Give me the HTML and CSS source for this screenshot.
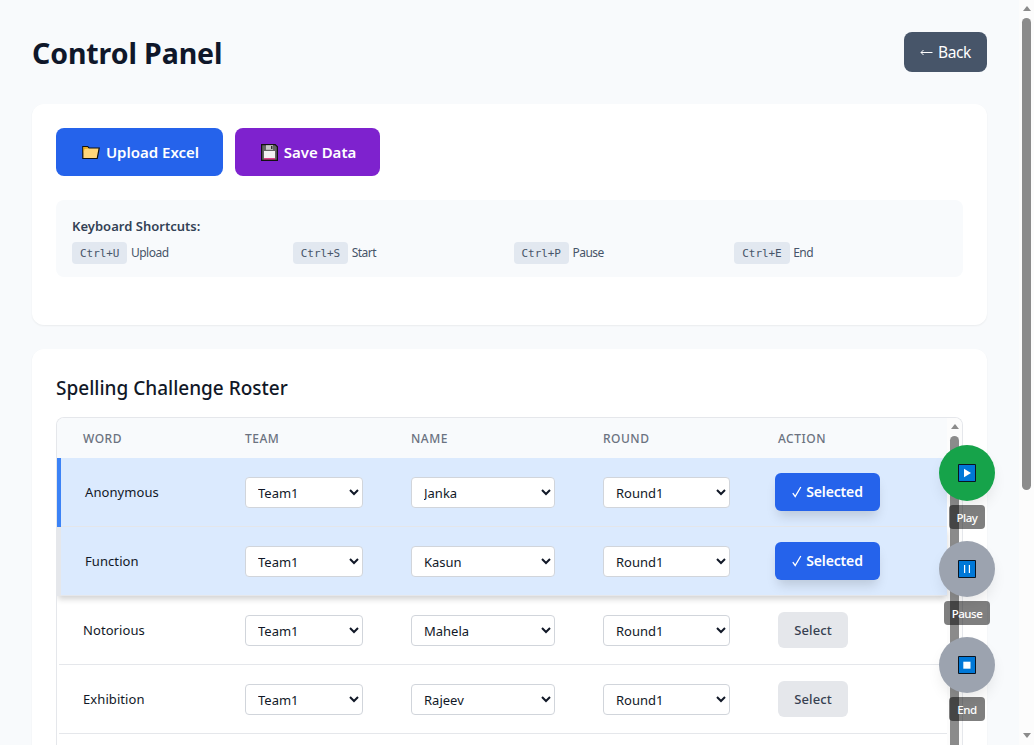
FILE: index.html
```html
<!DOCTYPE html>
<html lang="en">
<head>
<meta charset="utf-8">
<title>Control Panel</title>
<link rel="stylesheet" href="styles.css">
</head>
<body>
<main class="page">
  <header class="top">
    <h1 class="title">Control Panel</h1>
    <button class="back"><svg class="arrow" width="13" height="8" viewBox="0 0 13 8"><path d="M12.5 4.5H1M3.5 2L1 4.5 3.5 7" fill="none" stroke="#fff" stroke-width="1"/></svg><span>Back</span></button>
  </header>
  <section class="card tools">
    <div class="actions">
      <button class="action upload"><svg width="18" height="15" viewBox="0 0 18 15"><path d="M.8 13.5V1.5h4.8L7 3h10.2l-2 10.5z" fill="#ffd679" stroke="#111" stroke-width="1.2"/><path d="M1.5 2.2h3.8l.8 1.2-3.6.4-1 5z" fill="#eaa300"/></svg><span>Upload Excel</span></button>
      <button class="action save"><svg width="17" height="17" viewBox="0 0 17 17"><path d="M.6.6h13.6l2.2 2.2v13.6H.6z" fill="#636363" stroke="#111" stroke-width="1.2"/><path d="M5 1.2h7v4.6H5z" fill="#c8c8c8"/><path d="M10 2h1.5v3H10z" fill="#333"/><path d="M3 7h11v8H3z" fill="#f2f2f2"/><path d="M3 14.2h11v1.3H3z" fill="#d5146b"/></svg><span>Save Data</span></button>
    </div>
    <div class="shortcuts">
      <p class="shortcuts-title">Keyboard Shortcuts:</p>
      <div class="keys">
        <div class="key"><kbd>Ctrl+U</kbd><span>Upload</span></div>
        <div class="key"><kbd>Ctrl+S</kbd><span>Start</span></div>
        <div class="key"><kbd>Ctrl+P</kbd><span>Pause</span></div>
        <div class="key"><kbd>Ctrl+E</kbd><span>End</span></div>
      </div>
    </div>
  </section>
  <section class="card roster">
    <h2 class="subtitle">Spelling Challenge Roster</h2>
    <div class="table-box">
      <div class="table">
        <div class="row head"><span>WORD</span><span>TEAM</span><span>NAME</span><span>ROUND</span><span>ACTION</span></div>
        <div class="row chosen current">
          <span class="word">Anonymous</span>
          <select class="team"><option>Team1</option></select><select class="name"><option>Janka</option></select><select class="round"><option>Round1</option></select>
          <button class="pick on"><svg width="10" height="12" viewBox="0 0 10 12"><path d="M.8 7.2l2.4 3.3L8.8 1" fill="none" stroke="#fff" stroke-width="1.3"/></svg><span>Selected</span></button>
        </div>
        <div class="row chosen last">
          <span class="word">Function</span>
          <select class="team"><option>Team1</option></select><select class="name"><option>Kasun</option></select><select class="round"><option>Round1</option></select>
          <button class="pick on"><svg width="10" height="12" viewBox="0 0 10 12"><path d="M.8 7.2l2.4 3.3L8.8 1" fill="none" stroke="#fff" stroke-width="1.3"/></svg><span>Selected</span></button>
        </div>
        <div class="row">
          <span class="word">Notorious</span>
          <select class="team"><option>Team1</option></select><select class="name"><option>Mahela</option></select><select class="round"><option>Round1</option></select>
          <button class="pick">Select</button>
        </div>
        <div class="row">
          <span class="word">Exhibition</span>
          <select class="team"><option>Team1</option></select><select class="name"><option>Rajeev</option></select><select class="round"><option>Round1</option></select>
          <button class="pick">Select</button>
        </div>
      </div>
      <div class="bar inner"><i class="up"></i><i class="thumb"></i></div>
    </div>
  </section>
</main>
<div class="bar outer"><i class="up"></i><i class="thumb"></i><i class="down"></i></div>
<aside class="controls">
  <div class="control"><button class="circle play"><svg width="18" height="18" viewBox="0 0 18 18"><path d="M.5.5h17v17H.5z" fill="#0078d7" stroke="#0a1420"/><path d="M6 4.8l7 4.2-7 4.2z" fill="#fff"/></svg></button><span class="tip">Play</span></div>
  <div class="control"><button class="circle"><svg width="18" height="18" viewBox="0 0 18 18"><path d="M.5.5h17v17H.5z" fill="#0078d7" stroke="#0a1420"/><path d="M6.6 5v8M11.4 5v8" stroke="#fff" stroke-width="1.2"/></svg></button><span class="tip">Pause</span></div>
  <div class="control"><button class="circle"><svg width="18" height="18" viewBox="0 0 18 18"><path d="M.5.5h17v17H.5z" fill="#0078d7" stroke="#0a1420"/><path d="M5.3 5.7h7.2v7H5.3z" fill="#fff"/></svg></button><span class="tip">End</span></div>
</aside>
</body>
</html>
```
FILE: styles.css
```css
* { box-sizing: border-box; }
body {
  margin: 0;
  height: 745px;
  display: flex;
  overflow: hidden;
  background: #f8fafc;
  color: #111827;
  font-family: "Noto Sans", "Open Sans", sans-serif;
}
button { border: 0; font-family: inherit; padding: 0; display: flex; align-items: center; justify-content: center; white-space: nowrap; }
svg { display: block; flex: none; }
h1, h2, p { margin: 0; white-space: nowrap; }
.page { flex: 1; padding: 32px 32px 0; display: flex; flex-direction: column; min-width: 0; }
.top { display: flex; justify-content: space-between; height: 40px; margin-bottom: 32px; flex: none; }
.title { font-size: 28.5px; line-height: 43px; font-weight: 700; letter-spacing: -0.1px; color: #0f172a; }
.back { width: 83px; height: 40px; border-radius: 8px; background: #475569; color: #fff; font-size: 15.5px; letter-spacing: -0.35px; gap: 5px; }
.card { background: #fff; border-radius: 12px; padding: 24px; box-shadow: 0 1px 2px rgba(0,0,0,.06); flex: none; }
.tools { height: 221px; margin-bottom: 24px; }
.actions { display: flex; gap: 12px; margin-bottom: 24px; }
.action { height: 48px; border-radius: 8px; color: #fff; font-size: 15px; font-weight: 600; padding-left: 2px; }
.upload { width: 167px; background: #2563eb; gap: 6px; letter-spacing: 0; }
.save { width: 145px; background: #7e22ce; gap: 6px; letter-spacing: 0; }
.shortcuts { height: 77px; border-radius: 8px; background: #f8fafc; padding: 16px; }
.shortcuts-title { font-size: 13px; line-height: 20px; font-weight: 600; color: #334155; letter-spacing: 0.02px; }
.keys { display: grid; grid-template-columns: repeat(4, 1fr); gap: 8px; margin-top: 6px; }
.key { display: flex; align-items: center; gap: 3.5px; color: #475569; font-size: 12px; letter-spacing: -0.5px; line-height: 22px; }
kbd { font-family: "DejaVu Sans Mono", monospace; font-size: 11px; letter-spacing: -0.05px; background: #e2e8f0; border-radius: 4px; height: 22px; line-height: 23px; padding: 0 8px; }
.roster { flex: 1; min-height: 0; padding-bottom: 0; border-radius: 12px 12px 0 0; display: flex; flex-direction: column; }
.subtitle { font-size: 19px; line-height: 30px; font-weight: 500; letter-spacing: 0; margin-bottom: 14px; flex: none; }
.table-box { border: 1px solid #e5e7eb; border-bottom: 0; border-radius: 8px 8px 0 0; flex: 1; min-height: 0; display: flex; overflow: hidden; }
.table { width: 890px; flex: none; }
.row { display: grid; grid-template-columns: 162px 166px 192px 175px 1fr; align-items: center; height: 69px; padding: 0 0 1px 26px; position: relative; background: linear-gradient(#e5e7eb, #e5e7eb) 2px 100% / 100% 1px no-repeat; }
.head { height: 40px; padding-bottom: 0; background: #f8fafc; color: #6b7280; font-size: 12px; font-weight: 500; letter-spacing: 0.5px; }
.chosen { background-color: #dbeafe; box-shadow: inset 4px 0 #e5e7eb; }
.current { box-shadow: inset 4px 0 #3b82f6; }
.last { z-index: 1; box-shadow: inset 4px 0 #e5e7eb, 0 4px 6px -1px rgba(0,0,0,.18); }
.word { font-size: 13px; letter-spacing: 0.08px; }
.chosen .word { padding-left: 2px; }
select { height: 31px; border: 1px solid #d1d5db; border-radius: 4px; background: #fff; color: #111827; font: 13px "Noto Sans", sans-serif; padding: 1px 0 0 8px; }
.team { width: 118px; }
.name { width: 144px; }
.round { width: 127px; }
.pick { width: 70px; height: 36px; border-radius: 6px; background: #e5e7eb; color: #374151; font-size: 13px; font-weight: 500; letter-spacing: 0.1px; }
.on { width: 105px; height: 38px; margin-left: -3px; background: #2563eb; color: #fff; font-weight: 600; font-size: 14px; letter-spacing: -0.15px; gap: 4px; padding-bottom: 1px; box-shadow: 0 8px 12px -3px rgba(0,0,0,.15); }
.bar { width: 15px; flex: none; background: #fcfcfc; display: flex; flex-direction: column; align-items: center; overflow: hidden; }
.up, .down { border: 4.5px solid transparent; height: 0; flex: none; }
.up { border-top: 0; border-bottom: 5px solid #8b8b8b; margin: 6px 0 7px; }
.down { border-bottom: 0; border-top: 5px solid #8b8b8b; margin-top: 243px; }
.thumb { width: 9px; background: #8b8b8b; border-radius: 5px; flex: none; }
.inner .thumb { flex: 1; border-radius: 5px 5px 0 0; }
.outer .thumb { height: 472px; }
.controls { position: absolute; left: 939px; top: 445px; width: 56px; z-index: 3; display: flex; flex-direction: column; gap: 12px; }
.control { display: flex; flex-direction: column; align-items: center; gap: 4px; }
.circle { width: 56px; height: 56px; border-radius: 50%; background: #9ca3af; box-shadow: 0 8px 15px -3px rgba(0,0,0,.1); }
.play { background: #16a34a; }
.tip { height: 24px; border-radius: 4px; background: rgba(0,0,0,.5); color: #fff; padding: 1px 8px 0; font-size: 11.5px; line-height: 24px; font-weight: 500; letter-spacing: -0.45px; }
```
